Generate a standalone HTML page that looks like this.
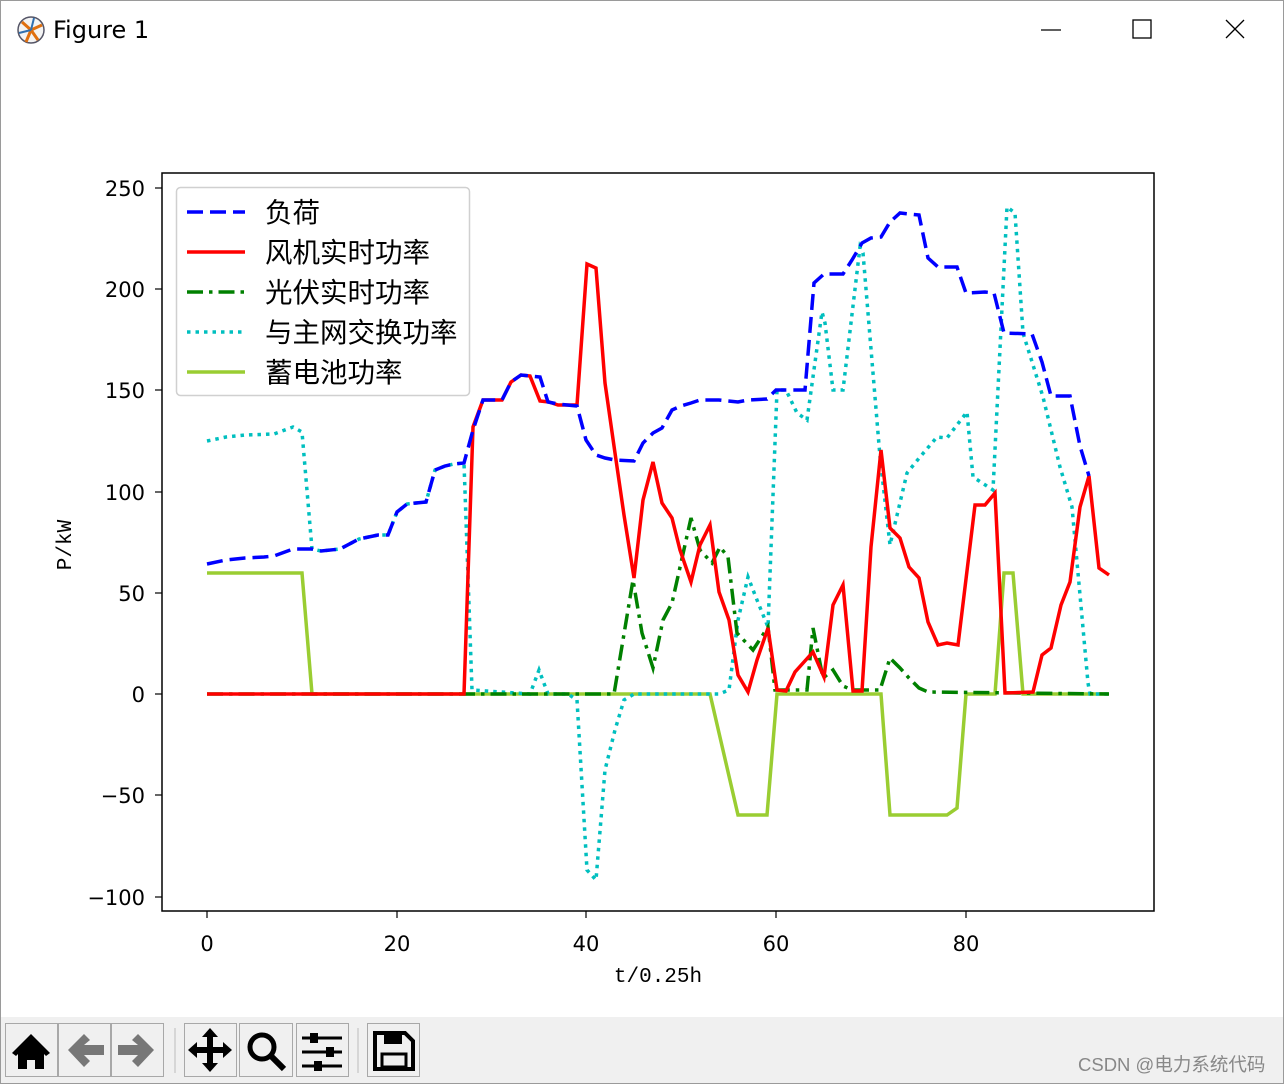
<!DOCTYPE html>
<html><head><meta charset="utf-8"><style>
html,body{margin:0;padding:0;background:#fff;width:1284px;height:1084px;overflow:hidden;font-family:"Liberation Sans","Noto Sans CJK SC",sans-serif}
</style></head><body>
<svg width="1284" height="1084" viewBox="0 0 1284 1084" xmlns="http://www.w3.org/2000/svg" style="position:absolute;left:0;top:0">
<rect x="0.5" y="0.5" width="1283" height="1083" fill="#fff" stroke="#9a9a9a"/>
<circle cx="31" cy="30" r="13" fill="#f4f4f4" stroke="#556" stroke-width="1.5"/>
<path d="M31 30 L22 22 M31 30 L42 25 M31 30 L26 42 M31 30 L38 40" stroke="#e07010" stroke-width="3"/>
<path d="M31 30 L34 18 M31 30 L19 33" stroke="#3070b0" stroke-width="2"/>
<text x="53" y="38" font-size="24" fill="#000" font-family="DejaVu Sans, sans-serif">Figure 1</text>
<line x1="1041" y1="30" x2="1061" y2="30" stroke="#000" stroke-width="1.3"/>
<rect x="1133" y="20" width="18" height="18" fill="none" stroke="#000" stroke-width="1.3"/>
<path d="M1226 20 L1244 38 M1244 20 L1226 38" stroke="#000" stroke-width="1.3"/>
<rect x="1" y="1017" width="1282" height="66" fill="#f0f0f0"/>
<g fill="#f0f0f0" stroke="#a8a8a8">
<rect x="5.5" y="1023.5" width="52" height="53"/><rect x="58.5" y="1023.5" width="52" height="53"/><rect x="111.5" y="1023.5" width="52" height="53"/>
<rect x="184.5" y="1023.5" width="52" height="53"/><rect x="239.5" y="1023.5" width="53" height="53"/><rect x="296.5" y="1023.5" width="52" height="53"/>
<rect x="367.5" y="1023.5" width="52" height="53"/>
</g>
<line x1="175" y1="1028" x2="175" y2="1073" stroke="#bbb"/><line x1="358" y1="1028" x2="358" y2="1073" stroke="#bbb"/>
<path d="M31 1034 L12 1053 L16 1056 L18 1054 L18 1069 L27 1069 L27 1060 L35 1060 L35 1069 L44 1069 L44 1054 L46 1056 L50 1053 Z" fill="#000"/>
<path d="M68 1050 L84 1034 L90 1040 L84 1045 L104 1045 L104 1055 L84 1055 L90 1061 L84 1067 Z" fill="#777"/>
<path d="M154 1050 L138 1034 L132 1040 L138 1045 L118 1045 L118 1055 L138 1055 L132 1061 L138 1067 Z" fill="#777"/>
<path d="M210 1028 L218 1037 L213 1037 L213 1047 L223 1047 L223 1042 L232 1050 L223 1058 L223 1053 L213 1053 L213 1063 L218 1063 L210 1072 L202 1063 L207 1063 L207 1053 L197 1053 L197 1058 L188 1050 L197 1042 L197 1047 L207 1047 L207 1037 L202 1037 Z" fill="#000"/>
<circle cx="262" cy="1047" r="12" fill="none" stroke="#000" stroke-width="5"/>
<line x1="271" y1="1056" x2="284" y2="1069" stroke="#000" stroke-width="6"/>
<g stroke="#000" stroke-width="3"><line x1="302" y1="1038" x2="342" y2="1038"/><line x1="302" y1="1052" x2="342" y2="1052"/><line x1="302" y1="1066" x2="342" y2="1066"/></g>
<rect x="310" y="1033" width="8" height="10" fill="#000"/><rect x="326" y="1047" width="8" height="10" fill="#000"/><rect x="314" y="1061" width="8" height="10" fill="#000"/>
<path d="M375 1033 L405 1033 L413 1041 L413 1069 L375 1069 Z" fill="none" stroke="#000" stroke-width="4"/>
<rect x="384" y="1033" width="18" height="11" fill="#000"/>
<rect x="382" y="1054" width="24" height="13" fill="none" stroke="#000" stroke-width="3"/>
<text x="1078" y="1071" font-size="18.5" fill="#888" font-family="Liberation Sans, Noto Sans CJK SC, sans-serif">CSDN @电力系统代码</text>
<rect x="162" y="173" width="992" height="738" fill="#fff" stroke="#000" stroke-width="1.5"/>
<g stroke="#000" stroke-width="1.2">
<line x1="155" y1="188" x2="162" y2="188"/><line x1="155" y1="289" x2="162" y2="289"/><line x1="155" y1="390" x2="162" y2="390"/><line x1="155" y1="492" x2="162" y2="492"/><line x1="155" y1="593" x2="162" y2="593"/><line x1="155" y1="694" x2="162" y2="694"/><line x1="155" y1="795" x2="162" y2="795"/><line x1="155" y1="897" x2="162" y2="897"/>
<line x1="207" y1="911" x2="207" y2="918"/><line x1="397" y1="911" x2="397" y2="918"/><line x1="586" y1="911" x2="586" y2="918"/><line x1="776" y1="911" x2="776" y2="918"/><line x1="966" y1="911" x2="966" y2="918"/>
</g>
<g font-size="21" fill="#000" text-anchor="end" font-family="DejaVu Sans, sans-serif">
<text x="145" y="196">250</text><text x="145" y="297">200</text><text x="145" y="398">150</text><text x="145" y="500">100</text><text x="145" y="601">50</text><text x="145" y="702">0</text><text x="145" y="803">−50</text><text x="145" y="905">−100</text>
</g>
<g font-size="21" fill="#000" text-anchor="middle" font-family="DejaVu Sans, sans-serif">
<text x="207" y="951">0</text><text x="397" y="951">20</text><text x="586" y="951">40</text><text x="776" y="951">60</text><text x="966" y="951">80</text>
</g>
<text x="658" y="982" font-size="21" text-anchor="middle" font-family="Liberation Mono, monospace">t/0.25h</text>
<text transform="translate(71,545) rotate(-90)" font-size="21" text-anchor="middle" font-family="Liberation Mono, monospace">P/kW</text>
<g fill="none" stroke-width="3.5" stroke-linejoin="miter">
<polyline stroke="#9acd32" points="207,573 302,573 312,694 710,694 738,815 767,815 777,694 881,694 890,815 947,815 957,808 966,694 995,694 1004,573 1013,573 1023,694 1109,694"/>
<polyline stroke="#00bfbf" stroke-dasharray="3.5,5" points="207,441 226,437 245,435 274,434 293,427 302,432 312,549 321,551 340,549 359,539 378,535 388,535 397,512 407,504 416,503 426,502 435,470 445,466 454,464 464,463 472,690 530,694 539,670 548,694 568,694 577,700 587,870 596,880 605,770 615,730 624,700 634,694 719,694 729,690 738,620 748,577 757,600 768,627 777,390 786,390 797,413 807,420 822,312 825,323 833,390 843,390 860,247 863,253 880,457 890,545 907,473 920,457 937,437 947,438 967,412 973,477 993,490 1007,207 1015,213 1023,333 1043,397 1060,467 1072,507 1088,683 1090,694 1109,694"/>
<polyline stroke="#008000" stroke-dasharray="16,6,3.5,6" points="207,694 614,694 633,580 642,633 653,668 663,620 672,603 691,518 700,550 712,563 720,547 728,557 737,633 753,650 768,627 775,690 807,690 813,628 823,678 833,670 843,686 852,690 880,690 890,658 900,668 909,678 919,688 928,692 1109,694"/>
<polyline stroke="#ff0000" points="207,694 464,694 473,427 483,400 502,400 511,382 521,375 530,376 540,401 549,402 558,405 577,405 587,264 596,268 605,383 615,453 624,515 634,578 643,500 653,462 662,503 672,518 680,550 691,582 700,545 710,525 719,592 729,620 738,675 748,692 757,660 768,628 777,690 786,691 795,672 813,652 824,677 833,605 843,585 853,691 862,691 871,547 881,450 890,528 900,538 909,567 919,578 928,622 938,645 947,643 958,645 975,505 985,505 995,493 1005,693 1033,692 1042,655 1051,648 1061,605 1070,582 1080,507 1089,476 1099,568 1109,575"/>
<polyline stroke="#0000ff" stroke-dasharray="16,7" points="207,564 226,560 245,558 264,557 274,556 293,549 312,549 321,551 340,549 359,539 378,535 388,535 397,512 407,504 416,503 426,502 435,470 445,466 454,464 464,463 473,430 483,400 502,400 511,382 521,375 530,376 540,377 548,402 558,404 577,406 586,440 596,455 605,458 615,460 634,461 643,443 653,433 662,428 672,410 681,406 691,403 700,400 719,400 738,402 748,400 767,399 776,390 805,390 814,283 824,274 843,274 852,260 862,243 871,238 881,237 890,222 900,213 919,215 928,258 938,267 957,267 966,293 985,292 994,293 1004,333 1032,334 1042,362 1051,396 1070,396 1080,446 1089,476"/>
</g>
<rect x="176.5" y="187.5" width="293" height="208" rx="4" fill="#fff" fill-opacity="0.85" stroke="#d0d0d0" stroke-width="1.5"/>
<g stroke-width="3.5" fill="none">
<line x1="187" y1="212" x2="245" y2="212" stroke="#0000ff" stroke-dasharray="16,7"/>
<line x1="187" y1="252" x2="245" y2="252" stroke="#ff0000"/>
<line x1="187" y1="292" x2="245" y2="292" stroke="#008000" stroke-dasharray="16,6,3.5,6"/>
<line x1="187" y1="332" x2="245" y2="332" stroke="#00bfbf" stroke-dasharray="3.5,5"/>
<line x1="187" y1="372" x2="245" y2="372" stroke="#9acd32"/>
</g>
<g font-size="27.5" fill="#000" font-family="Noto Sans CJK SC, sans-serif">
<text x="265" y="222">负荷</text><text x="265" y="262">风机实时功率</text><text x="265" y="302">光伏实时功率</text><text x="265" y="342">与主网交换功率</text><text x="265" y="382">蓄电池功率</text>
</g>
</svg>
</body></html>
